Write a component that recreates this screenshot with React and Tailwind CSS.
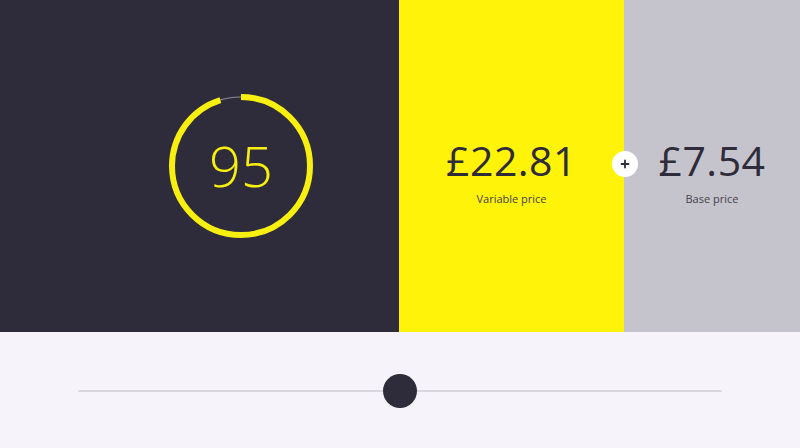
import { useState } from "react";

const Ring = ({ value }) => {
  const r = 69;
  const c = 2 * Math.PI * r;
  return (
    <div className="relative w-[144px] h-[144px]">
      <svg width="144" height="144" viewBox="0 0 144 144" className="absolute inset-0 -rotate-90">
        <circle cx="72" cy="72" r={r} fill="none" stroke="#8e8c98" strokeWidth="1.2" />
        <circle
          cx="72"
          cy="72"
          r={r}
          fill="none"
          stroke="#f7ef0f"
          strokeWidth="6"
          strokeDasharray={`${(c * value) / 100} ${c}`}
        />
      </svg>
      <div className="absolute inset-0 flex items-center justify-center text-[56px] font-light text-[#f7ef0f] leading-none pb-[2px]">
        {value}
      </div>
    </div>
  );
};

const Price = ({ amount, label }) => (
  <div className="flex flex-col items-center">
    <span className="text-[41px] leading-none text-[#2e2b3a] tracking-[0.5px]">{amount}</span>
    <span className="text-[11px] font-medium text-[#45424e] mt-[10px]">{label}</span>
  </div>
);

export default function App() {
  const [score] = useState(95);

  return (
    <div className="w-[800px] h-[448px] flex flex-col" style={{ fontFamily: '"Open Sans", "Noto Sans", sans-serif' }}>
      <div className="relative flex h-[332px]">
        <div className="w-[399px] bg-[#2e2b3a] flex items-center pl-[169px]">
          <Ring value={score} />
        </div>
        <div className="w-[225px] bg-[#fff30a] flex items-center justify-center pt-[16px]">
          <Price amount="£22.81" label="Variable price" />
        </div>
        <div className="flex-1 bg-[#c5c4cc] flex items-center justify-center pt-[16px]">
          <Price amount="£7.54" label="Base price" />
        </div>
        {/* plus badge sitting on the seam */}
        <div className="absolute left-[612px] top-[151px] w-[26px] h-[26px] rounded-full bg-white flex items-center justify-center">
          <svg width="10" height="10" viewBox="0 0 10 10">
            <path d="M5 1.5v7M1.5 5h7" stroke="#2e2b3a" strokeWidth="1.8" strokeLinecap="round" />
          </svg>
        </div>
      </div>
      <div className="flex-1 bg-[#f6f4fa] pt-[58px] px-[78px]">
        <div className="relative h-[2px] bg-[#d9d7de] rounded-full">
          <div className="absolute left-[305px] top-[-16px] w-[34px] h-[34px] rounded-full bg-[#2e2b3a]" />
        </div>
      </div>
    </div>
  );
}
